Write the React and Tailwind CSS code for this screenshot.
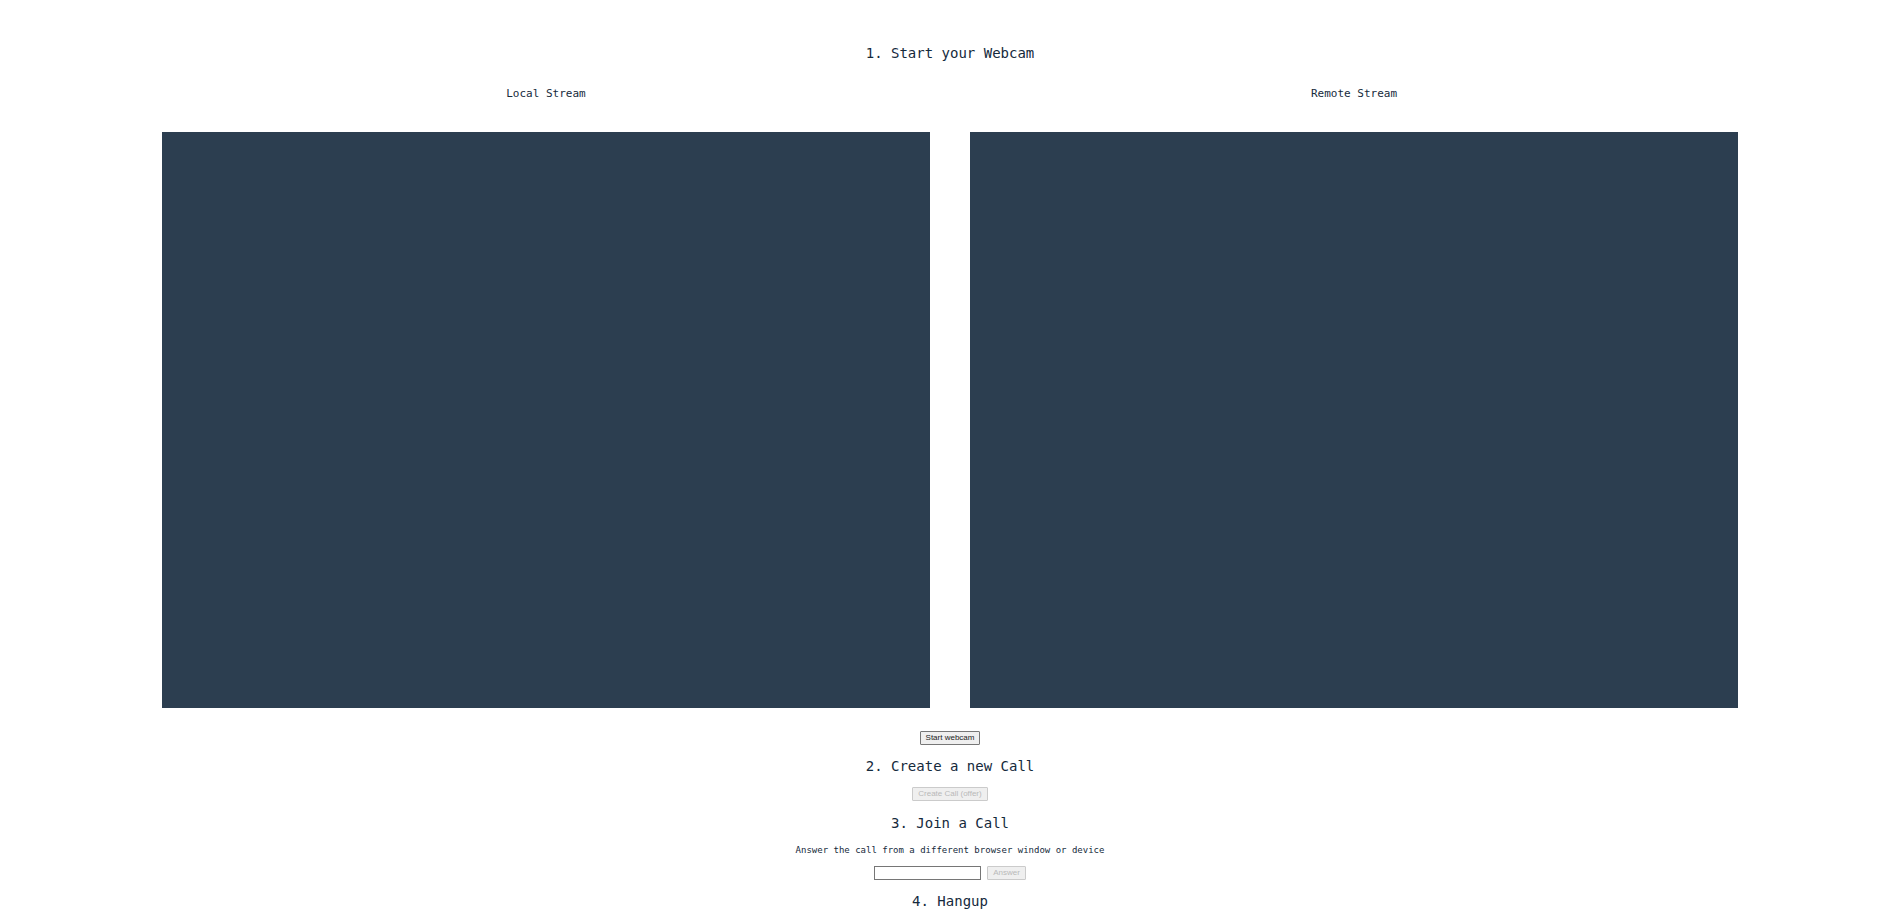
const buttonBase =
  'h-[14px] rounded-[1px] border px-[5px] font-["Liberation_Sans",Arial,sans-serif] text-[8px] leading-[12px] bg-[#efefef]';

function Heading({ children }) {
  return <h2 className="text-[14px] leading-[18px] font-medium">{children}</h2>;
}

function Stream({ title }) {
  return (
    <section>
      <h3 className="text-[11px] leading-4 font-medium">{title}</h3>
      <video aria-label={title} className="mt-[30px] block aspect-4/3 w-full bg-[#2c3e50]" />
    </section>
  );
}

function ActionButton({ children, disabled = false }) {
  const tone = disabled
    ? 'border-[#cbcbcb] text-[#b9b9b9]'
    : 'border-[#767676] text-[#222222]';
  return (
    <button type="button" disabled={disabled} className={`${buttonBase} ${tone}`}>
      {children}
    </button>
  );
}

export default function App() {
  return (
    <main className='flex flex-col items-center bg-white pt-11 pl-[7px] text-center font-["DejaVu_Sans_Mono","Liberation_Mono",monospace] text-[#152a3c]'>
      <Heading>1. Start your Webcam</Heading>
      <div className="mt-6 grid w-full max-w-[1576px] grid-cols-2 gap-10">
        <Stream title="Local Stream" />
        <Stream title="Remote Stream" />
      </div>
      <div className="mt-[23px] flex">
        <ActionButton>Start webcam</ActionButton>
      </div>
      <div className="mt-3 flex flex-col items-center gap-3">
        <Heading>2. Create a new Call</Heading>
        <ActionButton disabled>Create Call (offer)</ActionButton>
      </div>
      <div className="mt-[13px] flex flex-col items-center">
        <Heading>3. Join a Call</Heading>
        <p className="mt-3 text-[9px] leading-3">
          Answer the call from a different browser window or device
        </p>
        <div className="mt-[10px] flex gap-1.5">
          <input
            type="text"
            aria-label="Call ID"
            className="h-[14px] w-[107px] border border-[#767676] bg-white px-px text-[9px] text-black"
          />
          <ActionButton disabled>Answer</ActionButton>
        </div>
      </div>
      <div className="mt-3">
        <Heading>4. Hangup</Heading>
      </div>
    </main>
  );
}
